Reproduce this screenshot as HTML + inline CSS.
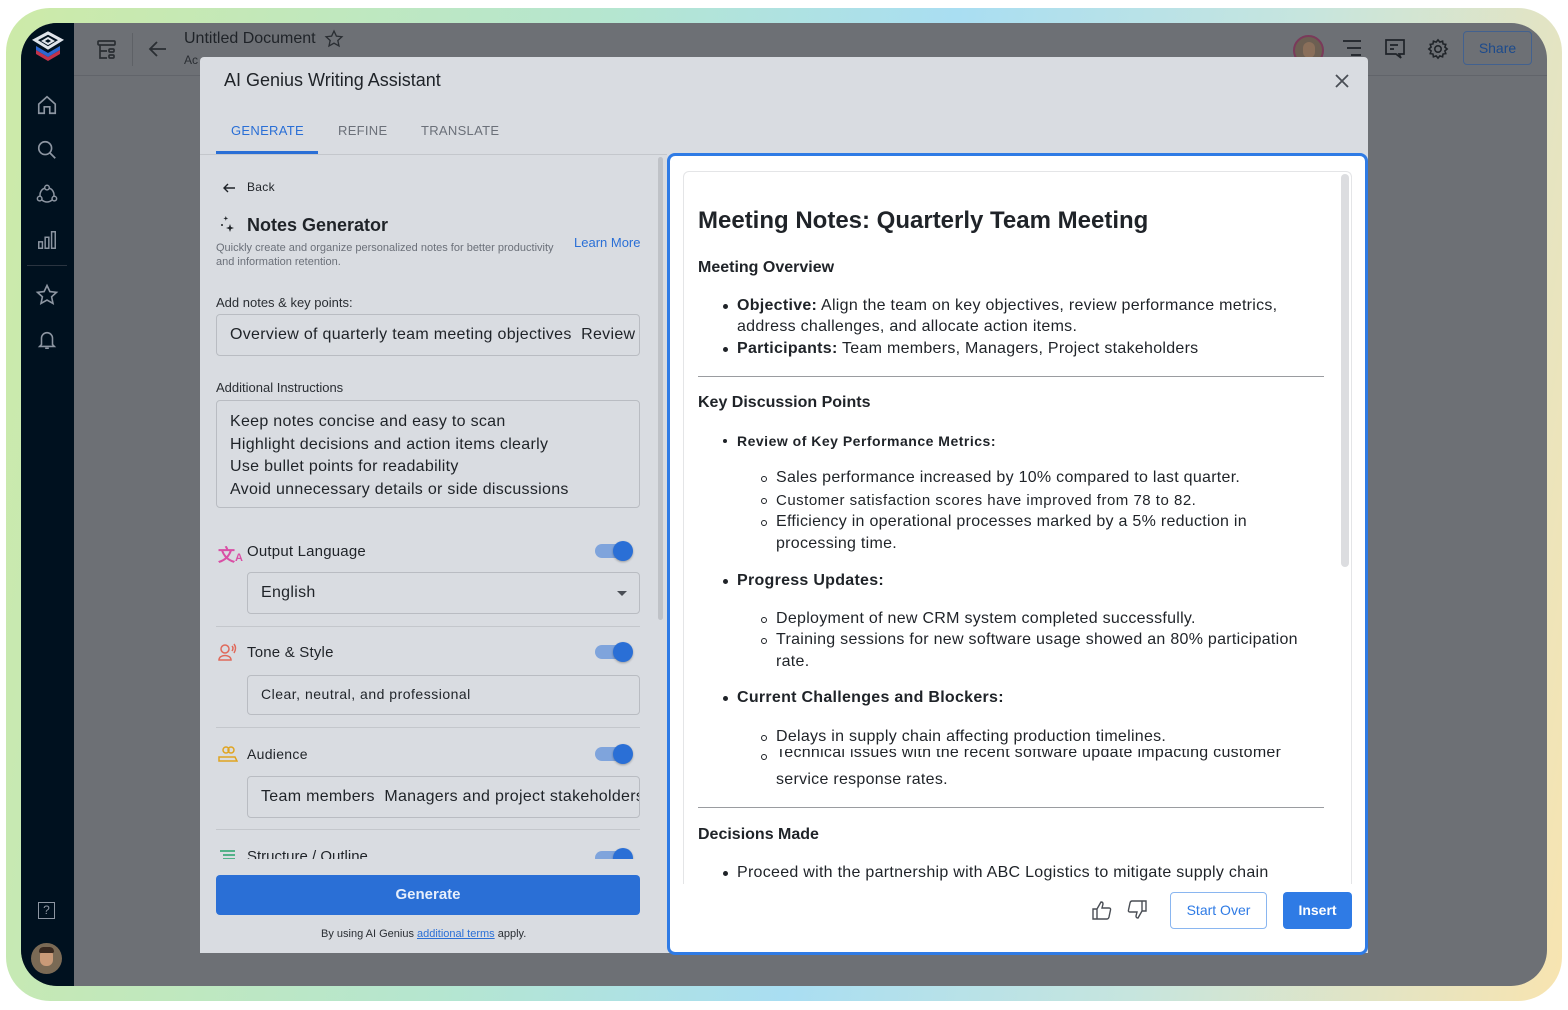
<!DOCTYPE html>
<html><head><meta charset="utf-8"><style>
*{margin:0;padding:0;box-sizing:border-box}
body{width:1568px;height:1010px;position:relative;overflow:hidden;background:#fff;font-family:"Liberation Sans",Arial,sans-serif;color:#1f2328}
.a{position:absolute}
.frame{left:6px;top:8px;width:1556px;height:993px;border-radius:44px;background:linear-gradient(100deg,#cdeaa8 0%,#b5e6d0 35%,#a9def2 55%,#c6e5de 75%,#f8e4b0 100%)}
.app{left:21px;top:23px;width:1526px;height:963px;border-radius:36px;background:#6d7075;overflow:hidden}
.side{left:0;top:0;width:53px;height:963px;background:#00111f}
.t{position:absolute;white-space:nowrap}
svg{position:absolute}
.inp{position:absolute;border:1px solid #b9bcc2;border-radius:4px;background:#d9dce1}
.inp .t{letter-spacing:.3px}
.tog{position:absolute;width:36px;height:14px;border-radius:7px;background:#7fa4dc}
.tog:after{content:"";position:absolute;right:-2px;top:-3px;width:20px;height:20px;border-radius:50%;background:#2a6fd6;box-shadow:0 1px 2px rgba(0,0,0,.3)}
.sep{position:absolute;left:216px;width:424px;height:1px;background:#c4c7cc}
.r{position:absolute;white-space:nowrap;font-size:16px;color:#1f2328;letter-spacing:.28px}
.dot{position:absolute;width:5px;height:5px;border-radius:50%;background:#1f2328}
.ring{position:absolute;width:6px;height:6px;border-radius:50%;border:1px solid #1f2328}
</style></head><body>
<div class="a frame"></div>
<div class="a app">
 <div class="a side">
  <svg style="left:9px;top:7px" width="36" height="36" viewBox="0 0 36 36"><path d="M6 20 L18 27 L30 20 L30 24 L18 31 L6 24Z" fill="#c2334a"/><path d="M6 16 L18 23 L30 16 L30 20 L18 27 L6 20Z" fill="#2d67d0"/><path d="M18 3 L31 10 L18 18 L5 10Z" fill="none" stroke="#dfe4ea" stroke-width="3"/><path d="M18 8 L23 11 L18 14 L13 11Z" fill="none" stroke="#dfe4ea" stroke-width="2"/></svg>
  <svg style="left:15px;top:71px" width="22" height="22" viewBox="0 0 24 24" fill="none" stroke="#8d96a2" stroke-width="1.8"><path d="M3 11 L12 3 L21 11 V21 H15 V14 H9 V21 H3Z"/></svg>
  <svg style="left:15px;top:116px" width="22" height="22" viewBox="0 0 24 24" fill="none" stroke="#8d96a2" stroke-width="1.8"><circle cx="10" cy="10" r="7"/><path d="M15 15 L21 21"/></svg>
  <svg style="left:15px;top:160px" width="22" height="22" viewBox="0 0 24 24" fill="none" stroke="#8d96a2" stroke-width="1.6"><circle cx="12" cy="5" r="2.5"/><circle cx="4" cy="17" r="2.5"/><circle cx="20" cy="17" r="2.5"/><path d="M9.5 5.5 A8 8 0 0 0 4.5 14.5 M14.5 5.5 A8 8 0 0 1 19.5 14.5 M6.5 18.5 A8 8 0 0 0 17.5 18.5"/></svg>
  <svg style="left:15px;top:206px" width="22" height="22" viewBox="0 0 24 24" fill="none" stroke="#8d96a2" stroke-width="1.6"><rect x="3" y="14" width="4" height="7"/><rect x="10" y="9" width="4" height="12"/><rect x="17" y="3" width="4" height="18"/></svg>
  <div class="a" style="left:6px;top:242px;width:40px;height:1px;background:#2a3440"></div>
  <svg style="left:14px;top:260px" width="24" height="24" viewBox="0 0 24 24" fill="none" stroke="#8d96a2" stroke-width="1.6"><path d="M12 2.5 L14.9 8.6 L21.5 9.3 L16.6 13.8 L18 20.4 L12 17 L6 20.4 L7.4 13.8 L2.5 9.3 L9.1 8.6Z"/></svg>
  <svg style="left:15px;top:305px" width="22" height="24" viewBox="0 0 24 24" fill="none" stroke="#8d96a2" stroke-width="1.7"><path d="M6 17 V10 A6 6 0 0 1 18 10 V17 L20 19 H4Z M10 21 H14"/></svg>
  <div class="a" style="left:17px;top:879px;width:17px;height:17px;border:1.5px solid #8d96a2;color:#8d96a2;font-size:12px;text-align:center;line-height:14px">?</div>
  <div class="a" style="left:10px;top:920px;width:31px;height:31px;border-radius:50%;background:#7a6a55"><div class="a" style="left:9px;top:6px;width:13px;height:17px;border-radius:6px;background:#c99a78"></div><div class="a" style="left:8px;top:4px;width:15px;height:6px;border-radius:5px 5px 2px 2px;background:#3a2a20"></div></div>
 </div>
 <div class="a" style="left:53px;top:52px;width:1473px;height:1px;background:#61646a"></div>
 <svg style="left:75px;top:15px" width="22" height="24" viewBox="0 0 22 24" fill="none" stroke="#2a2e33" stroke-width="1.7"><rect x="2" y="3" width="17" height="4" rx="1"/><path d="M4 7 V20 H11 M4 13 H11"/><rect x="13" y="11" width="5" height="3" rx="1"/><rect x="13" y="17" width="5" height="3" rx="1"/></svg>
 <div class="a" style="left:111px;top:10px;width:1px;height:33px;background:#5e6166"></div>
 <svg style="left:127px;top:17px" width="20" height="18" viewBox="0 0 20 18" fill="none" stroke="#2a2e33" stroke-width="1.8"><path d="M18 9 H3 M9 2 L2 9 L9 16"/></svg>
 <div class="t" style="left:163px;top:7px;font-size:16px;color:#1f2328">Untitled Document</div>
 <svg style="left:303px;top:6px" width="20" height="20" viewBox="0 0 24 24" fill="none" stroke="#2a2e33" stroke-width="1.6"><path d="M12 2.5 L14.9 8.6 L21.5 9.3 L16.6 13.8 L18 20.4 L12 17 L6 20.4 L7.4 13.8 L2.5 9.3 L9.1 8.6Z"/></svg>
 <div class="t" style="left:163px;top:30px;font-size:12px;color:#2a2e33">Ac</div>
 <div class="a" style="left:1272px;top:12px;width:31px;height:31px;border-radius:50%;border:2px solid #7a3a5a;background:#6c5f52"><div class="a" style="left:8px;top:5px;width:12px;height:16px;border-radius:6px;background:#8a6f5a"></div></div>
 <svg style="left:1320px;top:15px" width="22" height="20" viewBox="0 0 22 20" stroke="#1f2328" stroke-width="1.8"><path d="M2 3 H20 M6 10 H20 M10 17 H20"/></svg>
 <svg style="left:1363px;top:15px" width="22" height="22" viewBox="0 0 22 22" fill="none" stroke="#1f2328" stroke-width="1.7"><path d="M2 2 H20 V16 H15 L17 20 L12 16 H2Z M6 7 H14 M6 11 H10"/></svg>
 <svg style="left:1406px;top:15px" width="22" height="22" viewBox="0 0 24 24" fill="none" stroke="#1f2328" stroke-width="1.7"><circle cx="12" cy="12" r="3.5"/><path d="M12 2 L14 4.5 L17 3.5 L17.5 6.5 L20.5 7 L19.5 10 L22 12 L19.5 14 L20.5 17 L17.5 17.5 L17 20.5 L14 19.5 L12 22 L10 19.5 L7 20.5 L6.5 17.5 L3.5 17 L4.5 14 L2 12 L4.5 10 L3.5 7 L6.5 6.5 L7 3.5 L10 4.5Z"/></svg>
 <div class="a" style="left:1442px;top:8px;width:69px;height:34px;border:1px solid #42618f;border-radius:4px;color:#1c4a8c;font-size:14px;text-align:center;line-height:32px">Share</div>
</div>

<div class="a" style="left:200px;top:57px;width:1168px;height:896px;background:#d9dce1;border-radius:4px 4px 0 0"></div>
<div class="t" style="left:224px;top:70px;font-size:18px;color:#1f2328">AI Genius Writing Assistant</div>
<svg style="left:1335px;top:74px" width="14" height="14" viewBox="0 0 14 14" stroke="#4a4e55" stroke-width="1.8"><path d="M1 1 L13 13 M13 1 L1 13"/></svg>
<div class="t" style="left:231px;top:123px;font-size:13px;color:#2a6fd6;letter-spacing:.3px">GENERATE</div>
<div class="t" style="left:338px;top:123px;font-size:13px;color:#6b7079;letter-spacing:.3px">REFINE</div>
<div class="t" style="left:421px;top:123px;font-size:13px;color:#6b7079;letter-spacing:.3px">TRANSLATE</div>
<div class="a" style="left:200px;top:154px;width:467px;height:1px;background:#c4c7cc"></div>
<div class="a" style="left:216px;top:151px;width:102px;height:3px;background:#2a6fd6"></div>

<svg style="left:222px;top:182px" width="14" height="12" viewBox="0 0 14 12" fill="none" stroke="#1f2328" stroke-width="1.4"><path d="M13 6 H2 M6 2 L2 6 L6 10"/></svg>
<div class="t" style="left:247px;top:180px;font-size:12px;color:#1f2328;letter-spacing:.3px">Back</div>
<svg style="left:220px;top:216px" width="16" height="18" viewBox="0 0 16 18" fill="#1f2328"><path d="M8 0 L9 3 L12 4 L9 5 L8 8 L7 5 L4 4 L7 3Z" transform="translate(1,0) scale(.6)"/><path d="M10 8 L11 11 L14 12 L11 13 L10 16 L9 13 L6 12 L9 11Z"/><circle cx="2" cy="9" r="1"/></svg>
<div class="t" style="left:247px;top:215px;font-size:18px;color:#1f2328;font-weight:bold">Notes Generator</div>
<div class="t" style="left:216px;top:241px;font-size:11px;color:#6b7079;line-height:14px">Quickly create and organize personalized notes for better productivity<br>and information retention.</div>
<div class="t" style="left:574px;top:235px;font-size:13px;color:#2a6fd6">Learn More</div>
<div class="t" style="left:216px;top:295px;font-size:13px;color:#2a2e33">Add notes &amp; key points:</div>
<div class="inp" style="left:216px;top:314px;width:424px;height:42px;overflow:hidden"><div class="t" style="left:13px;top:11px;font-size:16px;color:#1f2328">Overview of quarterly team meeting objectives&nbsp; Review</div></div>
<div class="t" style="left:216px;top:380px;font-size:13px;color:#2a2e33">Additional Instructions</div>
<div class="inp" style="left:216px;top:400px;width:424px;height:108px"><div class="t" style="left:13px;top:10px;font-size:16px;line-height:22.5px;color:#1f2328">Keep notes concise and easy to scan<br>Highlight decisions and action items clearly<br>Use bullet points for readability<br>Avoid unnecessary details or side discussions</div></div>

<div class="t" style="left:218px;top:541px;font-size:17px;color:#d94fa5;font-weight:bold">文<span style="font-size:11px">A</span></div>
<div class="t" style="left:247px;top:543px;font-size:15px;color:#1f2328;letter-spacing:.2px">Output Language</div>
<div class="tog" style="left:595px;top:544px"></div>
<div class="inp" style="left:247px;top:572px;width:393px;height:42px"><div class="t" style="left:13px;top:11px;font-size:16px">English</div><div class="a" style="left:369px;top:18px;border:5px solid transparent;border-top:5px solid #4a4e55"></div></div>
<div class="sep" style="top:626px"></div>

<svg style="left:218px;top:643px" width="20" height="18" viewBox="0 0 20 18" fill="none" stroke="#e0695a" stroke-width="1.5"><circle cx="7" cy="6" r="4"/><path d="M1 17 C1 11 13 11 13 17Z M14 3 Q16 5 14 8 M16 1 Q19 5 16 10"/></svg>
<div class="t" style="left:247px;top:644px;font-size:15px;color:#1f2328;letter-spacing:.2px">Tone &amp; Style</div>
<div class="tog" style="left:595px;top:645px"></div>
<div class="inp" style="left:247px;top:675px;width:393px;height:40px"><div class="t" style="left:13px;top:10px;font-size:14px;letter-spacing:.5px">Clear, neutral, and professional</div></div>
<div class="sep" style="top:727px"></div>

<svg style="left:218px;top:745px" width="20" height="18" viewBox="0 0 20 18" fill="none" stroke="#e0a420" stroke-width="1.5"><circle cx="8" cy="5" r="3"/><circle cx="13" cy="5" r="3"/><path d="M1 16 V12 H17 L19 16Z"/></svg>
<div class="t" style="left:247px;top:746px;font-size:14px;color:#1f2328;letter-spacing:.3px">Audience</div>
<div class="tog" style="left:595px;top:747px"></div>
<div class="inp" style="left:247px;top:776px;width:393px;height:42px;overflow:hidden"><div class="t" style="left:13px;top:11px;font-size:16px">Team members&nbsp; Managers and project stakeholders</div></div>
<div class="sep" style="top:829px"></div>
<div class="a" style="left:200px;top:847px;width:460px;height:12px;overflow:hidden">
 <svg style="left:19px;top:2px" width="18" height="12" stroke="#25a46a" stroke-width="1.6"><path d="M1 2 H16 M4 6 H16 M4 10 H16"/></svg>
 <div class="t" style="left:47px;top:1px;font-size:15px">Structure / Outline</div>
 <div class="tog" style="left:395px;top:4px"></div>
</div>
<div class="a" style="left:216px;top:875px;width:424px;height:40px;border-radius:4px;background:#2a6fd6;color:#e6eefb;font-size:15px;text-align:center;line-height:40px;font-weight:600">Generate</div>
<div class="t" style="left:321px;top:928px;font-size:11px;color:#2a2e33">By using AI Genius <span style="color:#2a6fd6;text-decoration:underline">additional terms</span> apply.</div>
<div class="a" style="left:658px;top:157px;width:5px;height:463px;border-radius:3px;background:#bfc2c7"></div>

<div class="a" style="left:667px;top:153px;width:701px;height:802px;background:#fff;border:3px solid #2f7be5;border-radius:8px"></div>
<div class="a" style="left:683px;top:171px;width:669px;height:713px;border:1px solid #e4e5e7;border-bottom:none;border-radius:6px 6px 0 0"></div>
<div class="a" style="left:1341px;top:174px;width:8px;height:393px;border-radius:4px;background:#dcdde0"></div>

<div class="r" style="left:698px;top:207px;font-size:24px;font-weight:bold;letter-spacing:0">Meeting Notes: Quarterly Team Meeting</div>
<div class="r" style="left:698px;top:259px;font-weight:bold;letter-spacing:0">Meeting Overview</div>
<div class="dot" style="left:723px;top:304px"></div>
<div class="r" style="left:737px;top:297px"><b>Objective:</b> Align the team on key objectives, review performance metrics,</div>
<div class="r" style="left:737px;top:318px">address challenges, and allocate action items.</div>
<div class="dot" style="left:723px;top:347px"></div>
<div class="r" style="left:737px;top:340px"><b>Participants:</b> Team members, Managers, Project stakeholders</div>
<div class="a" style="left:698px;top:376px;width:626px;height:1px;background:#9a9ca0"></div>
<div class="r" style="left:698px;top:394px;font-weight:bold;letter-spacing:0">Key Discussion Points</div>
<div class="dot" style="left:723px;top:439px;width:4px;height:4px"></div>
<div class="r" style="left:737px;top:433px;font-size:14px;font-weight:bold;letter-spacing:.5px">Review of Key Performance Metrics:</div>
<div class="ring" style="left:761px;top:476px"></div>
<div class="r" style="left:776px;top:469px">Sales performance increased by 10% compared to last quarter.</div>
<div class="ring" style="left:761px;top:498px"></div>
<div class="r" style="left:776px;top:492px;font-size:15px;letter-spacing:.5px">Customer satisfaction scores have improved from 78 to 82.</div>
<div class="ring" style="left:761px;top:520px"></div>
<div class="r" style="left:776px;top:513px">Efficiency in operational processes marked by a 5% reduction in</div>
<div class="r" style="left:776px;top:535px">processing time.</div>
<div class="dot" style="left:723px;top:579px"></div>
<div class="r" style="left:737px;top:572px;font-weight:bold">Progress Updates:</div>
<div class="ring" style="left:761px;top:617px"></div>
<div class="r" style="left:776px;top:610px">Deployment of new CRM system completed successfully.</div>
<div class="ring" style="left:761px;top:638px"></div>
<div class="r" style="left:776px;top:631px">Training sessions for new software usage showed an 80% participation</div>
<div class="r" style="left:776px;top:653px">rate.</div>
<div class="dot" style="left:723px;top:696px"></div>
<div class="r" style="left:737px;top:689px;font-weight:bold">Current Challenges and Blockers:</div>
<div class="ring" style="left:761px;top:735px"></div>
<div class="r" style="left:776px;top:728px">Delays in supply chain affecting production timelines.</div>
<div class="ring" style="left:761px;top:754px"></div>
<div class="a" style="left:776px;top:749px;width:560px;height:14px;overflow:hidden"><div class="r" style="left:0;top:-5px">Technical issues with the recent software update impacting customer</div></div>
<div class="r" style="left:776px;top:771px">service response rates.</div>
<div class="a" style="left:698px;top:807px;width:626px;height:1px;background:#9a9ca0"></div>
<div class="r" style="left:698px;top:826px;font-weight:bold;letter-spacing:0">Decisions Made</div>
<div class="dot" style="left:723px;top:871px"></div>
<div class="r" style="left:737px;top:864px">Proceed with the partnership with ABC Logistics to mitigate supply chain</div>

<svg style="left:1092px;top:900px" width="20" height="20" viewBox="0 0 20 20" fill="none" stroke="#4a4e55" stroke-width="1.4"><path d="M1 9 H5 V19 H1Z M5 9 L9 2 Q11 2 11 4 L10 8 H17 Q19 8 18.5 10 L17 17 Q16.5 19 15 19 H5"/></svg>
<svg style="left:1127px;top:900px" width="20" height="20" viewBox="0 0 20 20" fill="none" stroke="#4a4e55" stroke-width="1.4"><path d="M19 11 H15 V1 H19Z M15 11 L11 18 Q9 18 9 16 L10 12 H3 Q1 12 1.5 10 L3 3 Q3.5 1 5 1 H15"/></svg>
<div class="a" style="left:1170px;top:892px;width:97px;height:37px;border:1px solid #8ab6f0;border-radius:4px;color:#2f7be5;font-size:14px;text-align:center;line-height:35px">Start Over</div>
<div class="a" style="left:1283px;top:892px;width:69px;height:37px;border-radius:4px;background:#2f7be5;color:#fff;font-size:14px;text-align:center;line-height:37px;font-weight:600">Insert</div>
</body></html>
